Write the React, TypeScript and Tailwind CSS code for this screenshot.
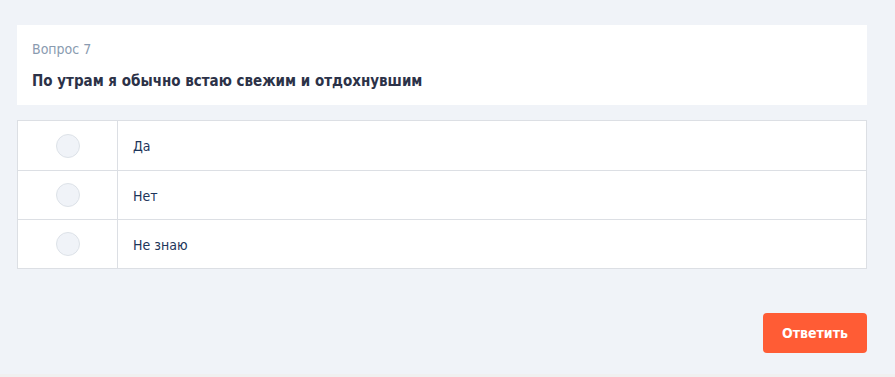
const OPTIONS = ["Да", "Нет", "Не знаю"];

export default function App() {
  return (
    <div
      className="min-h-[377px] bg-[#f0f0f0]"
      style={{ fontFamily: '"DejaVu Sans Condensed", "DejaVu Sans", sans-serif' }}
    >
      <div className="h-[374px] bg-[#f0f3f8] pt-[25px] pl-[17px]">
        <div className="w-[850px]">
          <div className="bg-white px-[15px] pt-[14px] pb-[12px]">
            <div className="text-[14px] leading-[20px] text-[#8a9bb0]">Вопрос 7</div>
            <div className="mt-[10px] text-[15px] font-bold leading-[24px] text-[#2c3248]">
              По утрам я обычно встаю свежим и отдохнувшим
            </div>
          </div>

          <div className="mt-[15px] border border-[#dcdfe4] bg-white">
            {OPTIONS.map((label, i) => (
              <div
                key={label}
                className={`flex h-[49px] items-stretch ${i > 0 ? "border-t border-[#dcdfe4]" : ""}`}
              >
                <div className="flex w-[100px] items-center justify-center border-r border-[#dcdfe4]">
                  <span className="h-[24px] w-[24px] rounded-full border border-[#dde2e8] bg-[#f0f3f8]" />
                </div>
                <div className="flex items-center pl-[15px] pt-[2px] text-[14px] text-[#1d355a]">{label}</div>
              </div>
            ))}
          </div>

          <div className="mt-[44px] flex justify-end">
            <button className="h-[40px] w-[104px] rounded-[4px] bg-[#ff5c35] text-[14px] font-bold text-white">
              Ответить
            </button>
          </div>
        </div>
      </div>
    </div>
  );
}
